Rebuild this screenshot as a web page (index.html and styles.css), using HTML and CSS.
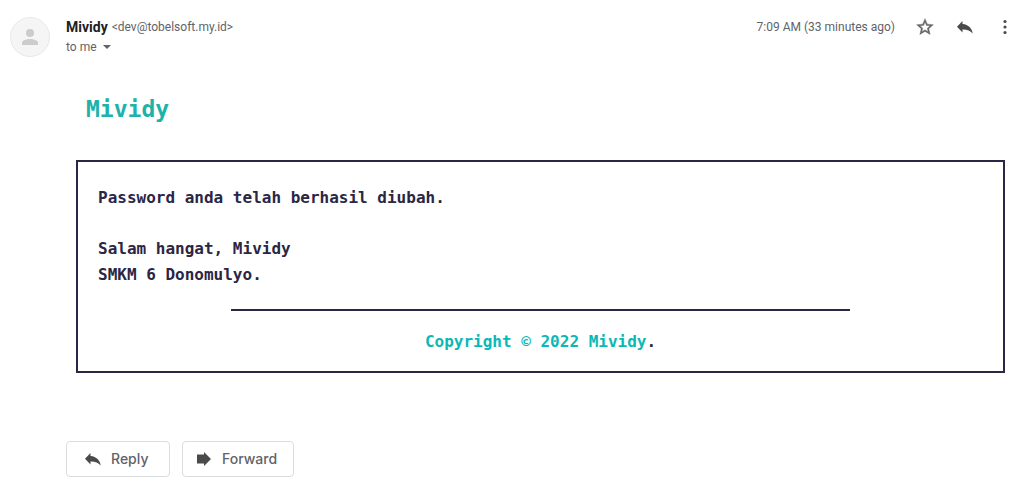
FILE: index.html
```html
<!DOCTYPE html>
<html lang="id">
<head>
<meta charset="utf-8">
<meta name="viewport" content="width=device-width, initial-scale=1">
<title>Mividy</title>
<link rel="stylesheet" href="styles.css">
</head>
<body>
<article class="message">
  <header class="header">
    <div class="avatar">
      <svg width="20" height="20" viewBox="0 0 20 20" aria-hidden="true"><circle cx="10" cy="6" r="4"/><path d="M2 18v-2c0-3 5-4 8-4s8 1 8 4v2z"/></svg>
    </div>
    <div class="sender">
      <div class="from"><strong class="name">Mividy</strong><span class="address">&lt;dev@tobelsoft.my.id&gt;</span></div>
      <button class="recipient" type="button">to me <svg width="8" height="4" viewBox="0 0 8 4" aria-hidden="true"><path d="M0 0h8L4 4z"/></svg></button>
    </div>
    <time class="time">7:09 AM (33 minutes ago)</time>
    <div class="tools">
      <button class="icon-button star" type="button" aria-label="Star"><svg width="20" height="20" viewBox="0 0 24 24"><path stroke="currentColor" stroke-width=".5" d="M22 9.24l-7.19-.62L12 2 9.19 8.63 2 9.24l5.46 4.73L5.82 21 12 17.27 18.18 21l-1.63-7.03L22 9.24zM12 15.4l-3.76 2.27 1-4.28-3.32-2.88 4.38-.38L12 6.1l1.71 4.04 4.38.38-3.32 2.88 1 4.28L12 15.4z"/></svg></button>
      <button class="icon-button" type="button" aria-label="Reply"><svg width="20" height="20" viewBox="0 0 20 20"><path d="M7.500 7V4L2 9.800l5.500 5.800v-3.100c4.500-.2 7.500 1.200 10.300 4C17 11.500 13.500 7.500 7.500 7z"/></svg></button>
      <button class="icon-button" type="button" aria-label="More"><svg width="20" height="20" viewBox="0 0 20 20"><circle cx="10" cy="4.500" r="1.600"/><circle cx="10" cy="10" r="1.600"/><circle cx="10" cy="15.500" r="1.600"/></svg></button>
    </div>
  </header>
  <main class="content">
    <h1 class="brand">Mividy</h1>
    <section class="card">
      <p class="text">Password anda telah berhasil diubah.</p>
      <p class="text">Salam hangat, Mividy<br>SMKM 6 Donomulyo.</p>
      <hr class="rule">
      <p class="copyright"><span class="accent">Copyright © 2022 Mividy</span>.</p>
    </section>
  </main>
  <footer class="actions">
    <button class="action" type="button"><svg width="20" height="20" viewBox="0 0 20 20" aria-hidden="true"><path d="M7.500 7V4L2 9.800l5.500 5.800v-3.100c4.500-.2 7.500 1.200 10.300 4C17 11.500 13.500 7.500 7.500 7z"/></svg>Reply</button>
    <button class="action forward" type="button"><svg width="20" height="20" viewBox="0 0 20 20" aria-hidden="true"><path d="M10 5.500V3l7 7-7 7v-2.500H3v-9z"/></svg>Forward</button>
  </footer>
</article>
</body>
</html>
```
FILE: styles.css
```css
* { box-sizing: border-box; }
body { margin: 0; background: #fff; color: #5f6368; font: 12px/20px Roboto, sans-serif; }
button { font: inherit; color: inherit; background: none; border: 0; padding: 0; }
svg { fill: currentColor; flex: none; }
.message { padding: 17px 12px 6px 10px; }
.header { display: flex; align-items: flex-start; }
.avatar { width: 40px; height: 40px; margin-right: 16px; border: 1px solid #e8e8e8; border-radius: 50%; background: #f5f5f5; color: #ccc; display: grid; place-items: center; }
.sender { flex: 1; }
.from { display: flex; align-items: center; gap: 4px; }
.name { font-size: 14px; color: #202124; }
.recipient { display: flex; align-items: center; gap: 6px; }
.tools { display: flex; gap: 20px; margin: 0 -10px 0 20px; }
.icon-button { display: flex; color: #4a4a4a; }
.star { color: #666; }
.content { margin: 36px 0 68px 66px; font-family: Consolas, "DejaVu Sans Mono", monospace; }
.brand { margin: 0 10px 34px; color: #20b2aa; font-size: 23px; line-height: 33px; }
.card { padding: 23px 20px 16px; border: 2px solid #2b2644; color: #2b2644; font-size: 16px; font-weight: 700; line-height: 26px; }
.text { margin: 0; }
.text + .text { margin-top: 25px; }
.rule { width: 70%; margin: 21px auto 18px; border: 0; border-top: 2px solid #2b2644; }
.copyright { margin: 0; text-align: center; }
.accent { color: #0bb8b5; }
.actions { display: flex; gap: 12px; margin-left: 56px; }
.action { display: flex; align-items: center; gap: 8px; min-width: 104px; height: 36px; padding: 0 16px; border: 1px solid #dadce0; border-radius: 4px; font-family: "Google Sans", Inter, sans-serif; font-size: 14px; font-weight: 500; }
.action svg { color: #4a4a4a; }
.forward { padding: 0 16px 0 11px; }
```
